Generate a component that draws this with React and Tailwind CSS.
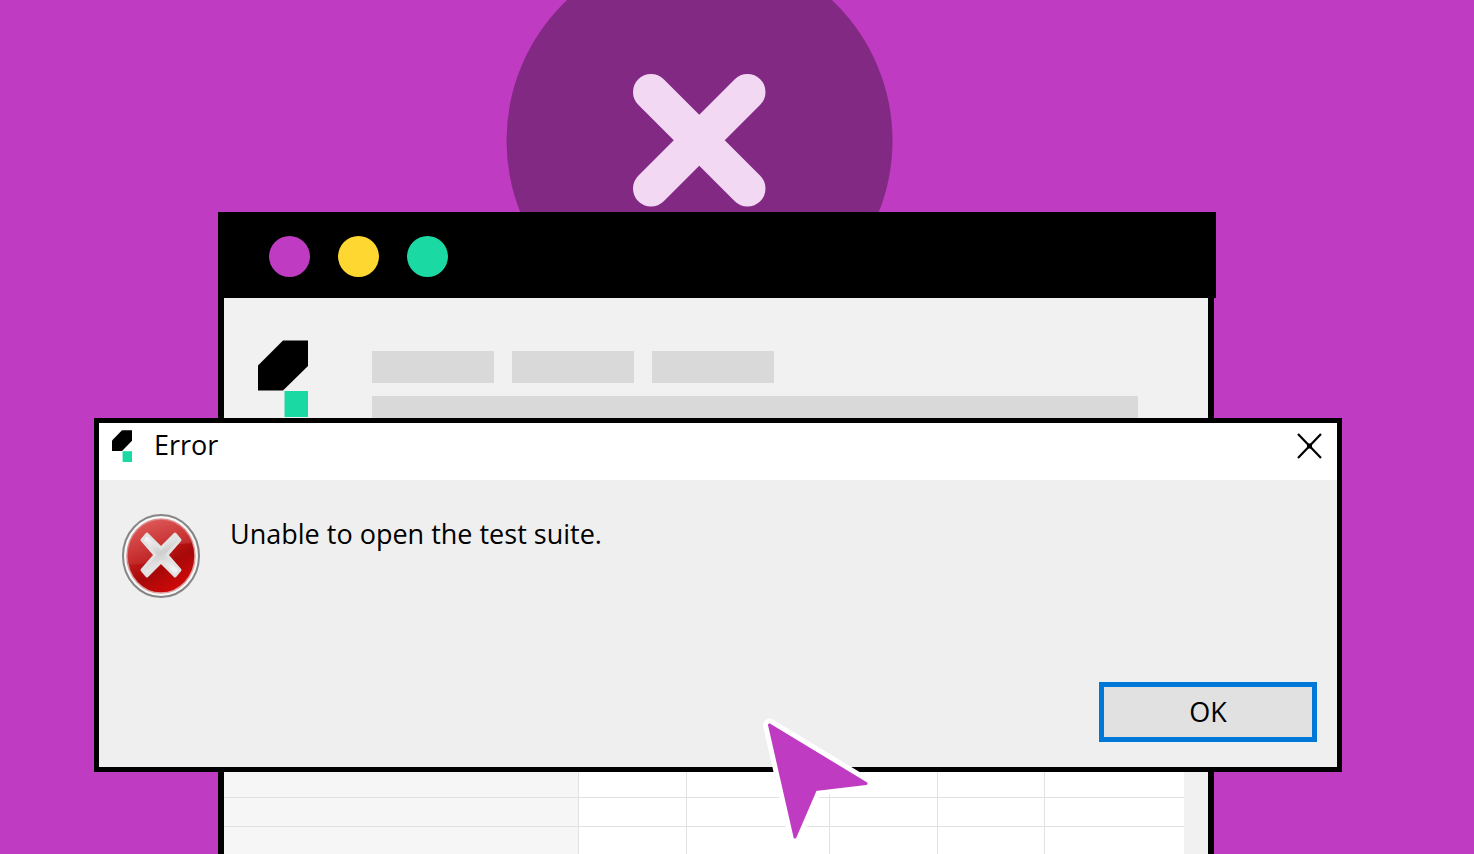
import React from 'react';

const rows = Array.from({ length: 14 });

const BrandMark = ({ className }) => (
    <svg className={className} viewBox="0 0 50 77" preserveAspectRatio="none" aria-hidden="true">
        <path d="M25 0.5H50V26L25 50.5H0V25.5Z" fill="#000" />
        <path d="M26.5 51H50V77H26.5Z" fill="#1bd9a3" />
    </svg>
);

const ErrorIcon = () => (
    <svg className="w-[78px] h-[84px] shrink-0" viewBox="0 0 78 84" aria-hidden="true">
        <defs>
            <linearGradient id="ball" x1="0.2" y1="0" x2="0.75" y2="1">
                <stop offset="0" stopColor="#d23c3c" />
                <stop offset="0.4" stopColor="#bd1a1a" />
                <stop offset="0.65" stopColor="#a80808" />
                <stop offset="1" stopColor="#d80808" />
            </linearGradient>
            <linearGradient id="gloss" x1="0.3" y1="0" x2="0.6" y2="1">
                <stop offset="0" stopColor="#e87070" stopOpacity="0.6" />
                <stop offset="1" stopColor="#d04848" stopOpacity="0.25" />
            </linearGradient>
            <linearGradient id="cross" x1="0" y1="0" x2="0.3" y2="1">
                <stop offset="0" stopColor="#ffffff" />
                <stop offset="0.55" stopColor="#cfcfcf" />
                <stop offset="1" stopColor="#f2f2f2" />
            </linearGradient>
        </defs>
        <ellipse cx="39" cy="42" rx="38" ry="41" fill="#f7f7f7" stroke="#858585" strokeWidth="2" />
        <ellipse cx="39" cy="42" rx="34" ry="37" fill="url(#ball)" stroke="#d9a0a0" strokeWidth="1.5" />
        <path d="M5 50C2 24 18 5 39 5C54 5 66 14 71 29C58 29 48 32 38 40C29 48 19 52 5 50Z" fill="url(#gloss)" />
        <path
            d="M25 20L39 34L53 20L58 26L45 41L58 56L53 62L39 48L25 62L20 56L33 41L20 26Z"
            fill="url(#cross)"
            stroke="#e2e2e2"
            strokeWidth="3"
            strokeLinejoin="round"
        />
    </svg>
);

const BrowserWindow = () => (
    <div className="relative flex flex-1 flex-col">
        <div className="flex h-[86px] shrink-0 items-center gap-7 bg-black pb-0.5 pl-[51px] pt-1">
            <span className="size-[41px] rounded-full bg-[#be3bc2]" />
            <span className="size-[41px] rounded-full bg-[#ffd731]" />
            <span className="size-[41px] rounded-full bg-[#1bd9a3]" />
        </div>

        <div className="mr-0.5 flex-1 border-x-6 border-black bg-[#f1f1f1]">
            {/* Toolbar placeholders */}
            <div className="flex items-start gap-16 pl-[34px] pr-[70px] pt-[42px]">
                <BrandMark className="h-[77px] w-[50px] shrink-0" />
                <div className="mt-[11px] flex-1">
                    <div className="flex gap-[18px]">
                        <div className="h-8 w-[122px] bg-[#d9d9d9]" />
                        <div className="h-8 w-[122px] bg-[#d9d9d9]" />
                        <div className="h-8 w-[122px] bg-[#d9d9d9]" />
                    </div>
                    <div className="mt-[13px] h-8 bg-[#d9d9d9]" />
                </div>
            </div>

            {/* Empty grid */}
            <div className="mt-[22px] pr-6">
                {rows.map((_, i) => (
                    <div key={i} className="flex h-[29px] border-b border-[#e2e2e2] bg-white">
                        <div className="w-[355px] border-r border-[#e2e2e2] bg-[#f6f6f6]" />
                        <div className="w-[108px] border-r border-[#e2e2e2]" />
                        <div className="w-[143px] border-r border-[#e2e2e2]" />
                        <div className="w-[108px] border-r border-[#e2e2e2]" />
                        <div className="w-[107px] border-r border-[#e2e2e2]" />
                        <div className="flex-1" />
                    </div>
                ))}
            </div>
        </div>
    </div>
);

const ErrorDialog = () => (
    <div
        role="alertdialog"
        aria-labelledby="dialog-title"
        aria-describedby="dialog-message"
        className="absolute left-[94px] right-[132px] top-[418px] border-5 border-black bg-[#efefef] text-black"
    >
        <div className="flex h-[57px] items-start bg-white pl-[13px] pr-[14px] pt-[7px]">
            <BrandMark className="h-8 w-5" />
            <h1 id="dialog-title" className="ml-[22px] flex-1 text-[27px] leading-[30px]">Error</h1>
            <button type="button" aria-label="Close" className="mt-[2px]">
                <svg className="h-7 w-[27px]" viewBox="0 0 27 28" fill="none" stroke="#000">
                    <path d="M2 2L25 26M25 2L2 26" strokeWidth="2.2" />
                    <path d="M11 11.5H16V16.5H11Z" fill="#000" stroke="none" />
                </svg>
            </button>
        </div>

        <div className="flex items-start gap-[30px] pl-[23px] pt-[34px]">
            <ErrorIcon />
            <p id="dialog-message" className="mt-[5px] text-[27px] leading-[30px]">Unable to open the test suite.</p>
        </div>

        <div className="flex justify-end pb-[25px] pr-5 pt-[84px]">
            <button
                type="button"
                className="h-[60px] w-[218px] border-5 border-[#0078d7] bg-[#e1e1e1] text-[27px] leading-[30px]"
            >
                OK
            </button>
        </div>
    </div>
);

const Pointer = () => (
    <svg className="absolute left-[760px] top-[712px] h-[136px] w-[118px]" viewBox="760 712 118 136" aria-hidden="true">
        <path
            d="M769.5 725L866 783.5L815.5 789.5L795 837Z"
            fill="#fff"
            stroke="#fff"
            strokeWidth="13"
            strokeLinejoin="round"
        />
        <path
            d="M769.5 725L866 783.5L815.5 789.5L795 837Z"
            fill="#be3bc2"
            stroke="#be3bc2"
            strokeWidth="3"
            strokeLinejoin="round"
        />
    </svg>
);

const App = () => (
    <main className="relative flex h-screen flex-col overflow-hidden bg-[#be3bc2] pl-[218px] pr-[258px] pt-[212px] font-['Open_Sans',sans-serif]">
        {/* Backdrop badge */}
        <svg className="absolute left-[506px] top-[-53px] size-[387px]" viewBox="0 0 387 387" aria-hidden="true">
            <circle cx="193.5" cy="193.5" r="193" fill="#822983" />
            <path
                d="M145 145L241.5 241.5M241.5 145L145 241.5"
                stroke="#f2d8f3"
                strokeWidth="36"
                strokeLinecap="round"
            />
        </svg>
        <BrowserWindow />
        <ErrorDialog />
        <Pointer />
    </main>
);

export default App;
